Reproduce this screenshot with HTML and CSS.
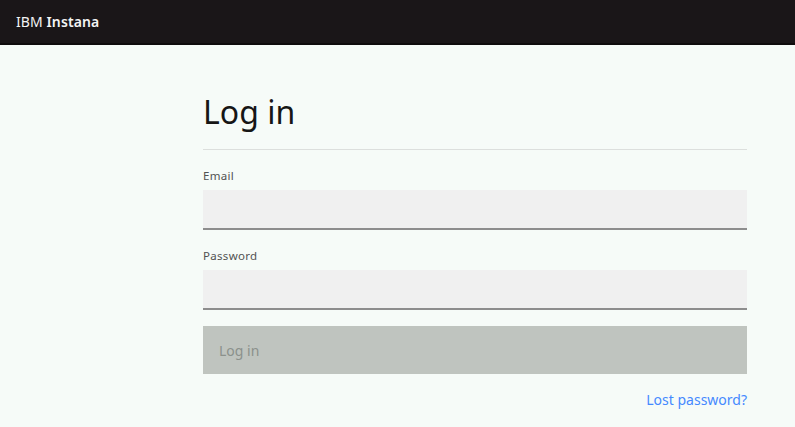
FILE: index.html
```html
<!DOCTYPE html>
<html lang="en">

<head>
    <meta charset="UTF-8">
    <meta name="viewport" content="width=device-width, initial-scale=1.0">
    <title>IBM Instana - Log in</title>
    <link rel="stylesheet" href="styles.css">
</head>

<body>
    <div class="header">
        <span class="brand">IBM <b>Instana</b></span>
    </div>
    <div class="container">
        <form class="login">
            <h1 class="title">Log in</h1>
            <label class="field-label" for="email">Email</label>
            <input class="field" id="email" type="email">
            <label class="field-label" for="password">Password</label>
            <input class="field" id="password" type="password">
            <button class="submit" type="button" disabled>Log in</button>
            <div class="links">
                <a class="lost" href="#">Lost password?</a>
            </div>
        </form>
    </div>
</body>

</html>
```

FILE: styles.css
```css
body {
    margin: 0;
    font-family: "Noto Sans", Arial, sans-serif;
    background-color: #f6fbf8;
    color: #161616;
}

.header {
    height: 43px;
    background-color: #1a1618;
    border-bottom: 2px solid #0f0c0d;
    display: flex;
    align-items: center;
    padding: 0 16px;
}

.brand {
    color: #f4f4f4;
    font-size: 14px;
    letter-spacing: 0.1px;
}

.brand b {
    font-weight: 600;
}

.container {
    padding: 47px 48px 0 203px;
}

.login {
    width: 544px;
    display: flex;
    flex-direction: column;
}

.title {
    margin: 0;
    font-size: 32px;
    font-weight: 400;
    line-height: 40px;
    padding-bottom: 17px;
    border-bottom: 1px solid #dcdfdd;
}

.field-label {
    font-size: 11.5px;
    color: #525252;
    letter-spacing: 0.3px;
    margin: 18px 0 6px;
    line-height: 16px;
}

.field {
    height: 38px;
    border: none;
    border-bottom: 2px solid #8d8d8d;
    background-color: #f0f0f0;
    padding: 0 16px;
    margin: 0;
    font-size: 14px;
    outline: none;
}

.submit {
    margin-top: 16px;
    height: 48px;
    border: none;
    background-color: #bfc4bf;
    color: #8b918c;
    font-family: inherit;
    font-size: 14px;
    text-align: left;
    padding: 0 16px;
}

.links {
    display: flex;
    justify-content: flex-end;
    margin-top: 16px;
}

.lost {
    color: #4589ff;
    text-decoration: none;
    font-size: 14px;
    line-height: 20px;
}
```
